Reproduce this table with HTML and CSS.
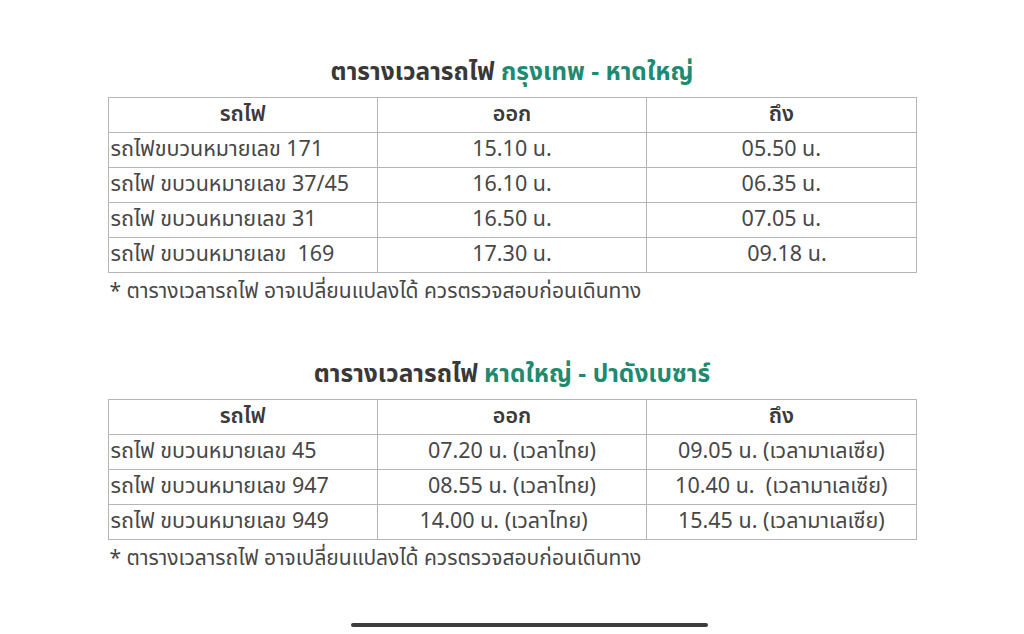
FILE: index.html
```html
<!DOCTYPE html>
<html lang="th">
<head>
<meta charset="utf-8">
<link rel="stylesheet" href="styles.css">
</head>
<body>
<main class="page">
  <section class="block">
    <h2 class="title">ตารางเวลารถไฟ <span class="accent">กรุงเทพ - หาดใหญ่</span></h2>
    <table class="tt">
      <tr><th>รถไฟ</th><th>ออก</th><th>ถึง</th></tr>
      <tr><td>รถไฟขบวนหมายเลข 171</td><td>15.10 น.</td><td>05.50 น.</td></tr>
      <tr><td>รถไฟ ขบวนหมายเลข 37/45</td><td>16.10 น.</td><td>06.35 น.</td></tr>
      <tr><td>รถไฟ ขบวนหมายเลข 31</td><td>16.50 น.</td><td>07.05 น.</td></tr>
      <tr><td>รถไฟ ขบวนหมายเลข&nbsp; 169</td><td>17.30 น.</td><td>&nbsp; 09.18 น.</td></tr>
    </table>
    <p class="note">* ตารางเวลารถไฟ อาจเปลี่ยนแปลงได้ ควรตรวจสอบก่อนเดินทาง</p>
  </section>
  <section class="block second">
    <h2 class="title">ตารางเวลารถไฟ <span class="accent">หาดใหญ่ - ปาดังเบซาร์</span></h2>
    <table class="tt">
      <tr><th>รถไฟ</th><th>ออก</th><th>ถึง</th></tr>
      <tr><td>รถไฟ ขบวนหมายเลข 45</td><td>07.20 น. (เวลาไทย)</td><td>09.05 น. (เวลามาเลเซีย)</td></tr>
      <tr><td>รถไฟ ขบวนหมายเลข 947</td><td>08.55 น. (เวลาไทย)</td><td>10.40 น.&nbsp; (เวลามาเลเซีย)</td></tr>
      <tr><td>รถไฟ ขบวนหมายเลข 949</td><td>14.00 น. (เวลาไทย)&nbsp; &nbsp;</td><td>15.45 น. (เวลามาเลเซีย)</td></tr>
    </table>
    <p class="note">* ตารางเวลารถไฟ อาจเปลี่ยนแปลงได้ ควรตรวจสอบก่อนเดินทาง</p>
  </section>
  <div class="home-bar"></div>
</main>
</body>
</html>
```

FILE: styles.css
```css
html, body {
  margin: 0;
  padding: 0;
  background: #ffffff;
}
body {
  font-family: "Noto Sans Thai", "Noto Sans", "Noto Sans Thai UI", sans-serif;
  color: #444444;
}
.page {
  width: 1024px;
  height: 634px;
  display: flex;
  flex-direction: column;
  align-items: center;
  padding-top: 56px;
  box-sizing: border-box;
}
.block {
  width: 809px;
  display: flex;
  flex-direction: column;
  align-items: stretch;
}
.second {
  margin-top: 53px;
}
.title {
  margin: 0 0 7px 0;
  text-align: center;
  font-size: 24.5px;
  font-weight: 700;
  line-height: 34px;
  color: #383838;
}
.accent {
  color: #1f8a70;
}
.tt {
  width: 809px;
  border-collapse: collapse;
  table-layout: fixed;
}
.tt th, .tt td {
  border: 1px solid #b5b5b5;
  height: 34px;
  padding: 0 2px;
  font-size: 21.5px;
  font-weight: 400;
  line-height: 26px;
  text-align: center;
  white-space: pre;
  color: #474747;
}
.tt th {
  font-weight: 600;
  color: #3a3a3a;
}
.tt td:first-child {
  text-align: left;
}
.note {
  margin: 6px 0 0 2px;
  font-size: 21px;
  line-height: 26px;
  color: #474747;
}
.home-bar {
  margin-top: auto;
  margin-bottom: 7px;
  margin-left: 35px;
  width: 357px;
  height: 4px;
  border-radius: 2px;
  background: #3c3c3c;
}
```
